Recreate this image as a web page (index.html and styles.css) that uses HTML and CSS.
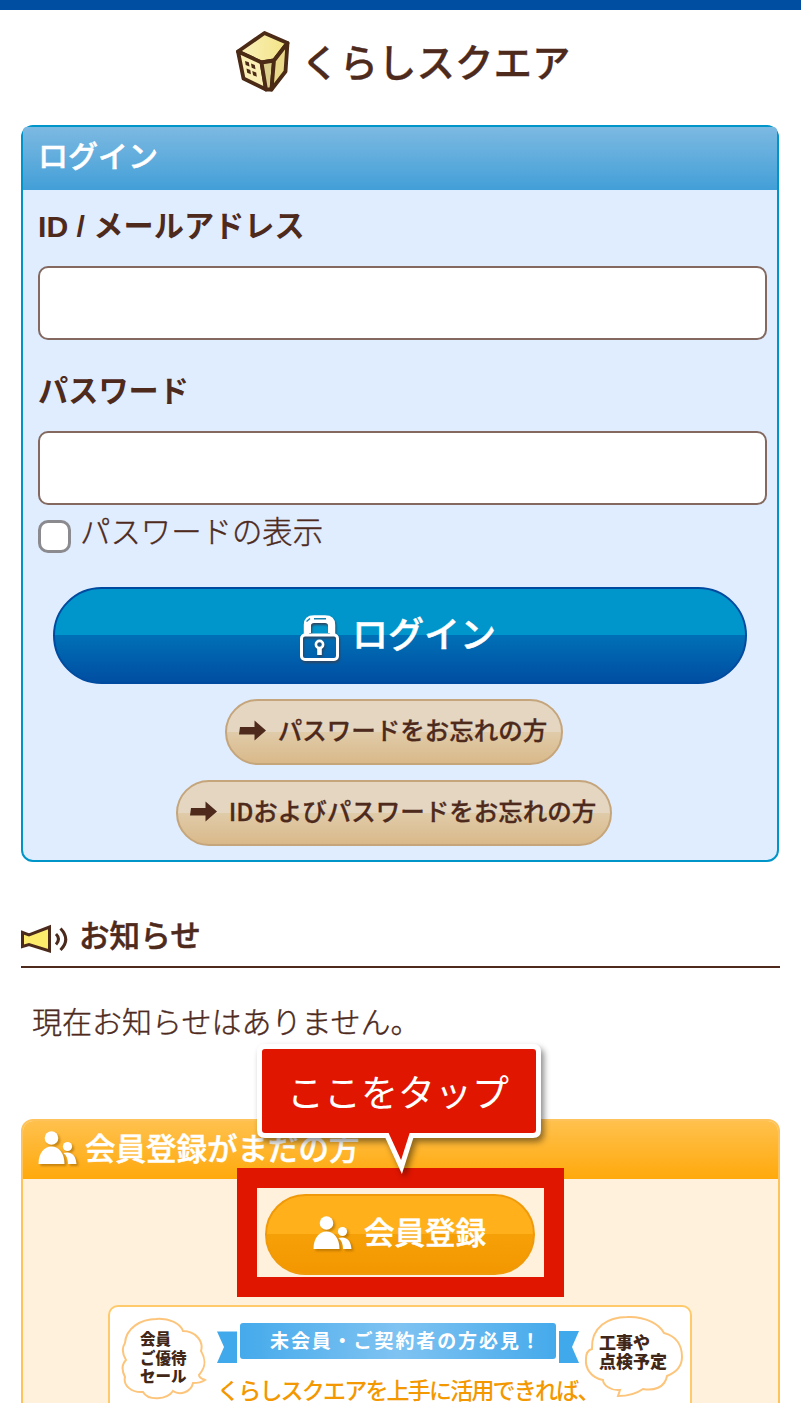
FILE: index.html
```html
<!DOCTYPE html>
<html lang="ja">
<head>
    <meta charset="UTF-8">
    <meta name="viewport" content="width=device-width, initial-scale=1.0">
    <title>くらしスクエア</title>
    <link rel="stylesheet" href="styles.css">
</head>
<body>
    <svg width="0" height="0" class="defs">
        <symbol id="people" viewBox="0 0 40 34">
            <circle cx="13.5" cy="7" r="6.8"/>
            <path d="M.5 33C.5 22 6 15.500 13.500 15.500S26.500 22 26.500 33z"/>
            <circle cx="29.500" cy="15.500" r="4.600"/>
            <path d="M25.500 22C34 19.500 38 25 38.500 33H30C30 28 28.500 24.500 25.500 22z"/>
        </symbol>
        <symbol id="arrow" viewBox="0 0 27 21">
            <path d="M1 7H15.500V.5L27 10.500 15.500 20.500V14.500H0z"/>
        </symbol>
    </svg>

    <header class="site-header">
        <svg class="logo-icon" viewBox="0 0 54 61">
            <defs>
                <linearGradient id="roof"><stop offset="0" stop-color="#faf0bd"/><stop offset="1" stop-color="#f3e485"/></linearGradient>
            </defs>
            <g stroke="#4b2a16" stroke-width="3.800" stroke-linejoin="round">
                <path d="M28.500 2L51.500 12 38 29.500 25.500 31.500 2 20.500z" fill="url(#roof)"/>
                <path d="M2 20.500L25.500 31.500 30 58.500 7.500 47.500z" fill="#faefb5"/>
                <path d="M25.500 31.500L38 29.500 35.500 58.500H30z" fill="#dccf8c"/>
                <path d="M38 29.500L51.500 12 49.500 40.500 35.500 58.500z" fill="#e9d989"/>
            </g>
            <path d="M9 30l3.800 1.300.7 4.200-3.800-1.500zM15 32.500l3.800 1.500.7 4.200-3.800-1.500zM10.500 37.500l3.800 1.500.6 4.200-3.700-1.500zM16.300 40l3.900 1.600.6 4.200-3.700-1.600z" fill="#4b2a16"/>
        </svg>
        <span class="logo-text">くらしスクエア</span>
    </header>

    <section class="login">
        <h2 class="login-title">ログイン</h2>
        <form class="login-form">
            <label class="field-label" for="user">ID / メールアドレス</label>
            <input class="field" type="text" id="user">
            <label class="field-label second" for="password">パスワード</label>
            <input class="field" type="password" id="password">
            <label class="show-password"><input type="checkbox" class="check">パスワードの表示</label>
            <button type="button" class="btn-login">
                <svg class="lock" viewBox="0 0 40 47" fill="none" stroke="#fff">
                    <path d="M6.500 19V10Q6.500 3 14 3H25Q32.500 3 32.500 10V19" stroke-width="5.500"/>
                    <path d="M9.500 18V10.500Q9.500 6.500 14 6.500H25Q29.500 6.500 29.500 10.500V18" stroke-width="3"/>
                    <path d="M6.500 6.500L10 3.500M14 3.700H26" stroke="#147fae" stroke-width="1.400"/>
                    <rect x="1.500" y="20" width="36" height="24.500" rx="3.500" stroke-width="3"/>
                    <circle cx="19.500" cy="29.500" r="3.600" stroke-width="2.600"/>
                    <path d="M19.500 32V40" stroke-width="4.600"/>
                </svg>
                <span>ログイン</span>
            </button>
            <div class="links">
                <a class="btn-sub"><svg class="arrow"><use href="#arrow"/></svg>パスワードをお忘れの方</a>
                <a class="btn-sub"><svg class="arrow"><use href="#arrow"/></svg>IDおよびパスワードをお忘れの方</a>
            </div>
        </form>
    </section>

    <section class="news">
        <h2 class="news-title">
            <svg class="speaker" viewBox="0 0 48 30" stroke="#4b2a1c" fill="none">
                <path d="M1.500 8.500L8 11 28.500 3V27L8 20.500 1.500 22.500z" fill="#fdec6c" stroke-width="3"/>
                <path d="M35 10Q40 15 35 20.500" stroke-width="3"/>
                <path d="M39.500 4.500Q50 15.500 39.500 26" stroke-width="3"/>
            </svg>
            <span>お知らせ</span>
        </h2>
        <p class="news-text">現在お知らせはありません。</p>
    </section>

    <section class="member">
        <h2 class="member-title"><svg class="people"><use href="#people"/></svg>会員登録がまだの方</h2>
        <div class="join">
            <a class="btn-join"><svg class="people"><use href="#people"/></svg>会員登録</a>
            <div class="highlight"></div>
            <div class="callout">
                <svg class="callout-shape" viewBox="0 0 286 134">
                    <path d="M9 2.500H276Q281.500 2.500 281.500 8V86Q281.500 91.500 276 91.500H154.500L144.500 123 130 91.500H8Q2.500 91.500 2.500 86V8Q2.500 2.500 8 2.500z" fill="#e11600" stroke="#fff" stroke-width="5"/>
                </svg>
                <span class="callout-text">ここをタップ</span>
            </div>
        </div>
        <div class="banner">
            <div class="bubble">
                <svg class="cloud" viewBox="0 0 86 84"><path d="M4 26C5 11 20 2 35 2C48 1 59 6 62 14C74 14 83 24 80 34C86 44 84 51 78 58C78 61 82 62 84 63C81 65 76 66 72 66C70 75 59 79 52 74C46 83 27 84 22 75C10 76 2 68 4 60C-1 50 3 45 5 43C2 38 0 32 4 26z"/></svg>
                <span class="bubble-text">会員<br>ご優待<br>セール</span>
            </div>
            <div class="banner-main">
                <div class="ribbon">
                    <svg class="tail" viewBox="0 0 20 32"><path d="M0 .5H20V32H0L7 16z"/></svg>
                    <span class="ribbon-text">未会員・ご契約者の方必見！</span>
                    <svg class="tail" viewBox="0 0 20 32"><path d="M0 0H20L13 16 20 32H0z"/></svg>
                </div>
                <p class="banner-lead">くらしスクエアを上手に活用できれば、</p>
            </div>
            <div class="bubble right">
                <svg class="cloud" viewBox="0 0 100 82"><path d="M8 34C7 12 24 2 43 2C62 1 76 10 80 18C92 21 98 30 98 42C98 50 93 57 83 61C81 73 69 76 59 74C52 79 45 81 34 81L36 75C27 76 19 70 19 65C7 63 1 53 2 44C2 39 4 35 8 34z"/></svg>
                <span class="bubble-text">工事や<br>点検予定</span>
            </div>
        </div>
    </section>
</body>
</html>
```

FILE: styles.css
```css
* {
    box-sizing: border-box;
}
body {
    margin: 0;
    height: 1403px;
    overflow: hidden;
    border-top: 10px solid #004ea2;
    font-family: "Liberation Sans", "Noto Sans CJK JP", sans-serif;
    font-size: 30px;
    color: #4e2a1c;
    background-color: #fff;
}
h2, p {
    margin: 0;
}
svg {
    display: block;
    flex-shrink: 0;
}
.defs {
    position: absolute;
}
.site-header {
    height: 115px;
    padding: 21px 0 0 236px;
    display: flex;
    gap: 11px;
}
.logo-icon {
    width: 54px;
    height: 61px;
}
.logo-text {
    font-family: "Noto Sans CJK JP", sans-serif;
    font-size: 38.500px;
    font-weight: 500;
    line-height: 58px;
    white-space: nowrap;
    -webkit-text-stroke: 0.3px;
}
.login {
    width: 758px;
    height: 737px;
    margin-left: 21px;
    border: 2px solid #0095c9;
    border-radius: 12px;
    background-color: #e0edff;
}
.login-title {
    height: 63px;
    padding-left: 15px;
    border-radius: 4px 4px 0 0;
    font-size: 30px;
    font-weight: 500;
    line-height: 59px;
    color: #fff;
    background: linear-gradient(#7cb9e2, #5dabdc 55%, #429fd8);
    -webkit-text-stroke: 0.5px;
}
.login-form {
    display: flex;
    flex-direction: column;
    padding: 17px 12px 0 15px;
}
.field-label {
    height: 40px;
    font-size: 30.200px;
    font-weight: bold;
    line-height: 40px;
}
.second {
    margin-top: 32px;
}
.field {
    width: 729px;
    height: 74px;
    margin-top: 19px;
    padding: 0 12px;
    border: 2px solid #836960;
    border-radius: 10px;
    font-size: 30px;
    background-color: #fff;
}
.show-password {
    display: flex;
    gap: 9px;
    height: 50px;
    padding-top: 8px;
    font-size: 30.400px;
    font-weight: 300;
    line-height: 38px;
    -webkit-text-stroke: 0.4px;
}
.check {
    appearance: none;
    width: 33px;
    height: 33px;
    margin: 7px 0 0;
    border: 3px solid #8b8a8f;
    border-radius: 10px;
    background-color: #fff;
}
.btn-login {
    display: flex;
    justify-content: center;
    gap: 12px;
    width: 694px;
    height: 97px;
    margin: 32px 0 0 15px;
    padding: 0 4px 0 0;
    border: 2px solid #004b9f;
    border-radius: 49px;
    font-family: "Noto Sans CJK JP", sans-serif;
    font-size: 36px;
    font-weight: 500;
    line-height: 86px;
    color: #fff;
    background: linear-gradient(#0096cb 50%, #0070b6 50%, #004ea2);
    -webkit-text-stroke: 0.5px;
}
.lock {
    width: 40px;
    height: 47px;
    margin-top: 26px;
    filter: drop-shadow(1px 2px 1px #2d455f);
}
.links {
    display: flex;
    flex-direction: column;
    align-items: center;
    gap: 15px;
    margin: 15px 15px 0 0;
}
.btn-sub {
    display: flex;
    gap: 12px;
    height: 66px;
    padding: 0 14px 0 12px;
    border: 2px solid #c5a57b;
    border-radius: 33px;
    font-family: "Noto Sans CJK JP", sans-serif;
    font-size: 24.500px;
    font-weight: 500;
    line-height: 58px;
    white-space: nowrap;
    background: linear-gradient(#e4d6c0 50%, #e0cba9 50%, #d9b98a);
    -webkit-text-stroke: 0.3px;
}
.arrow {
    width: 27px;
    height: 21px;
    margin-top: 19px;
    fill: #4e2a1c;
}
.news {
    margin: 0 21px;
    padding-top: 50px;
}
.news-title {
    display: flex;
    gap: 10px;
    height: 56px;
    border-bottom: 2px solid #4e2a1c;
    font-size: 30.600px;
    font-weight: 500;
    line-height: 48px;
    -webkit-text-stroke: 0.5px;
}
.speaker {
    width: 48px;
    height: 30px;
    margin-top: 12px;
}
.news-text {
    padding: 33px 0 0 11px;
    font-size: 30px;
    font-weight: 300;
    line-height: 44px;
    -webkit-text-stroke: 0.4px;
}
.member {
    width: 759px;
    height: 340px;
    margin: 74px 0 0 21px;
    border: 2px solid #ffc35b;
    border-radius: 12px;
    background-color: #fff1db;
}
.member-title {
    display: flex;
    gap: 7px;
    height: 58px;
    padding-left: 15px;
    border-radius: 10px 10px 0 0;
    font-size: 30.500px;
    font-weight: 500;
    line-height: 57px;
    color: #fff;
    background: linear-gradient(#ffc14d, #ffa90c);
    -webkit-text-stroke: 0.5px;
}
.people {
    width: 40px;
    height: 34px;
    margin-top: 10px;
    fill: #fff;
    filter: drop-shadow(2px 2px 1px #99600090);
    -webkit-text-stroke: 0;
}
.join {
    position: relative;
    height: 126px;
    padding: 15px 0 0 242px;
}
.btn-join {
    display: flex;
    justify-content: center;
    gap: 11px;
    width: 270px;
    height: 81px;
    padding-right: 1px;
    border: 2px solid #f09a0a;
    border-radius: 41px;
    font-size: 30.500px;
    font-weight: 500;
    line-height: 75px;
    color: #fff;
    background: linear-gradient(#ffb01b 50%, #f6a008 50%, #f39700);
    -webkit-text-stroke: 0.5px;
}
.btn-join .people {
    margin-top: 20px;
}
.highlight {
    position: absolute;
    top: -11px;
    left: 214px;
    width: 327px;
    height: 129px;
    border: 20px solid #e11600;
}
.callout {
    position: absolute;
    top: -135px;
    left: 234px;
}
.callout-shape {
    width: 286px;
    height: 134px;
    filter: drop-shadow(3px 4px 3px rgba(0, 0, 0, 0.45));
}
.callout-text {
    position: absolute;
    top: 23px;
    left: 30px;
    font-size: 37px;
    line-height: 56px;
    color: #fff;
    white-space: nowrap;
}
.banner {
    display: flex;
    width: 584px;
    height: 150px;
    margin-left: 85px;
    border: 2px solid #ffca6b;
    border-radius: 10px;
    background-color: #fff;
}
.bubble {
    position: relative;
    width: 86px;
    height: 84px;
    margin: 10px 0 0 11px;
}
.cloud {
    fill: #fff;
    stroke: #fdc57b;
    stroke-width: 2;
}
.bubble-text {
    position: absolute;
    top: 14px;
    left: 19px;
    font-size: 15.500px;
    font-weight: 900;
    line-height: 18.500px;
    white-space: nowrap;
    color: #412717;
}
.banner-main {
    width: 362px;
    margin-left: 10px;
}
.ribbon {
    display: flex;
    gap: 3px;
    padding-top: 16px;
}
.tail {
    width: 20px;
    height: 32px;
    margin-top: 8px;
    fill: #40a9eb;
}
.ribbon-text {
    width: 317px;
    height: 36px;
    padding-left: 30px;
    border-radius: 3px;
    font-size: 19px;
    font-weight: bold;
    letter-spacing: 1.900px;
    line-height: 37px;
    white-space: nowrap;
    color: #fff;
    background: linear-gradient(90deg, #45aaeb, #7fc3f2 50%, #45aaeb);
}
.banner-lead {
    margin-top: 11px;
    font-size: 23px;
    font-weight: 500;
    letter-spacing: -1.800px;
    line-height: 35px;
    white-space: nowrap;
    color: #f39800;
}
.right {
    width: 100px;
    height: 82px;
    margin: 8px 0 0 5px;
}
.right .bubble-text {
    top: 19px;
    left: 15px;
    font-size: 17px;
    line-height: 19px;
}
```
